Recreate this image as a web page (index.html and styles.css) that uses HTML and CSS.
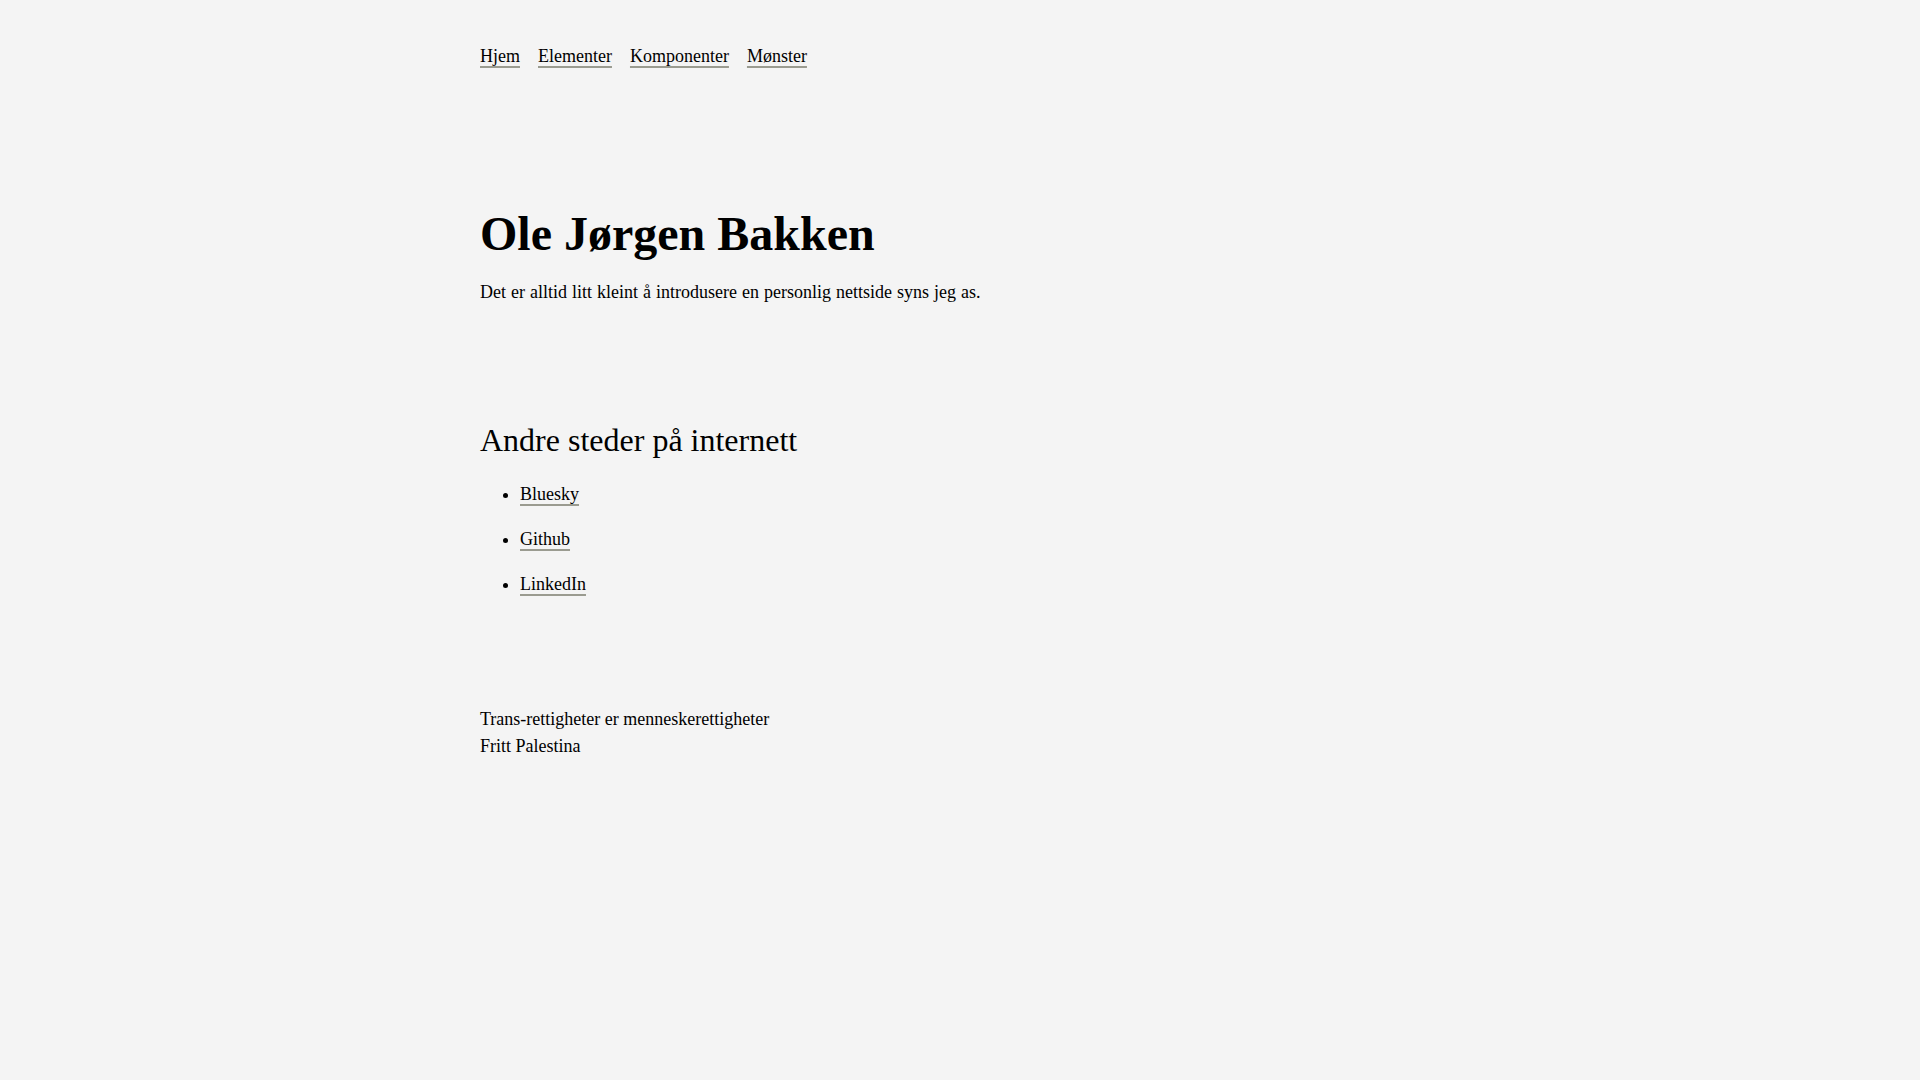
FILE: index.html
```html
<!DOCTYPE html>
<html lang="no">
<head>
        <meta charset="UTF-8">
        <meta name="viewport" content="width=device-width, initial-scale=1.0">
        <title>Ole Jørgen Bakken</title>
        <link rel="stylesheet" href="styles.css">
</head>
<body>
        <div class="container">
                <nav class="nav">
                        <a href="#">Hjem</a>
                        <a href="#">Elementer</a>
                        <a href="#">Komponenter</a>
                        <a href="#">Mønster</a>
                </nav>

                <main>
                        <section class="intro">
                                <h1>Ole Jørgen Bakken</h1>
                                <p>Det er alltid litt kleint å introdusere en personlig nettside syns jeg as.</p>
                        </section>

                        <section class="links">
                                <h2>Andre steder på internett</h2>
                                <ul>
                                        <li><a href="#">Bluesky</a></li>
                                        <li><a href="#">Github</a></li>
                                        <li><a href="#">LinkedIn</a></li>
                                </ul>
                        </section>
                </main>

                <footer class="footer">
                        <p>Trans-rettigheter er menneskerettigheter</p>
                        <p>Fritt Palestina</p>
                </footer>
        </div>
</body>
</html>
```

FILE: styles.css
```css
*{
        margin: 0;
        padding: 0;
        box-sizing: border-box;
}
body{
        background-color: #f4f4f4;
        color: #000;
        font-family: "Liberation Serif", "Times New Roman", serif;
        font-size: 18px;
        line-height: 1.5;
}
.container{
        width: 960px;
        margin: 0 auto;
        padding-top: 43px;
}
a{
        color: inherit;
        text-decoration: underline;
        text-decoration-color: #9a9b90;
        text-decoration-thickness: 2px;
        text-underline-offset: 4px;
}
.nav{
        display: flex;
        gap: 18px;
}
.intro{
        margin-top: 135px;
}
.intro h1{
        font-size: 48px;
        line-height: 1.2;
}
.intro p{
        margin-top: 16px;
        word-spacing: 0.5px;
}
.links{
        margin-top: 115px;
}
.links h2{
        font-size: 32px;
        font-weight: normal;
        line-height: 1.2;
}
.links ul{
        margin-top: 22px;
        padding-left: 40px;
}
.links li{
        margin-bottom: 18px;
}
.footer{
        margin-top: 108px;
}
```
